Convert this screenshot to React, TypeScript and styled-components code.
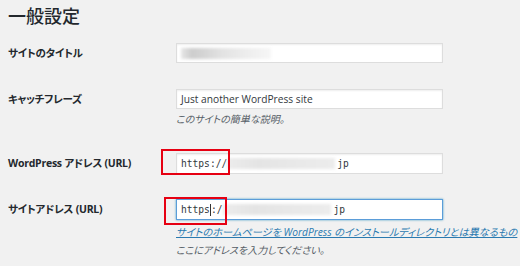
import React from "react";
import styled, { createGlobalStyle } from "styled-components";

const Global = createGlobalStyle`
  html, body { margin: 0; padding: 0; background: #f1f1f1; }
  body { font-family: "Open Sans", "Noto Sans CJK JP", sans-serif; color: #23282d; }
`;

const Page = styled.div`
  width: 520px;
  height: 266px;
  overflow: hidden;
  padding-left: 8px;
  box-sizing: border-box;
`;

const Title = styled.h1`
  margin: 0 0 4px;
  padding-top: 4px;
  font-family: "Noto Sans CJK JP", sans-serif;
  font-weight: 500;
  font-size: 18px;
  line-height: 22px;
  color: #23282d;
`;

const Row = styled.div<{ $pt?: number; $pb?: number }>`
  display: grid;
  grid-template-columns: 168px 267px;
  align-items: start;
  padding: ${(p) => p.$pt ?? 13}px 0 ${(p) => p.$pb ?? 13}px;
`;

const Label = styled.div`
  font-family: "Open Sans", "Noto Sans CJK JP", sans-serif;
  font-feature-settings: "palt";
  font-weight: 700;
  font-size: 10.5px;
  line-height: 20px;
  letter-spacing: -0.25px;
  color: #23282d;
  white-space: nowrap;
`;

const Cell = styled.div`
  position: relative;
  display: flex;
  flex-direction: column;
`;

const Field = styled.div<{ $focus?: boolean; $h?: number }>`
  box-sizing: border-box;
  height: ${(p) => p.$h ?? 20}px;
  width: 267px;
  background: #fff;
  border: 1px solid ${(p) => (p.$focus ? "#5b9dd9" : "#dddddd")};
  box-shadow: ${(p) =>
    p.$focus ? "0 0 2px rgba(30,140,190,.8)" : "inset 0 1px 2px rgba(0,0,0,.07)"};
  display: flex;
  align-items: center;
  padding-left: 4px;
  font-size: 10.2px;
  color: #32373c;
  white-space: nowrap;
  overflow: hidden;
`;

const Mono = styled.span`
  font-family: "DejaVu Sans Mono", "Liberation Mono", monospace;
  font-size: 9.6px;
  color: #32373c;
`;

const Caret = styled.span`
  display: inline-block;
  width: 1px;
  height: 12px;
  background: #333;
`;

const Blur = styled.span<{ $w: number; $ml?: number; $dark?: boolean }>`
  display: inline-block;
  width: ${(p) => p.$w}px;
  height: 11px;
  margin-left: ${(p) => p.$ml ?? 0}px;
  background: ${(p) =>
    p.$dark
      ? "linear-gradient(90deg, #e6e6e6 0%, #cdcdcd 12%, #d4d4d4 25%, #e2e2e2 45%, #ececec 70%, #f6f6f6 100%)"
      : "linear-gradient(90deg, #ececec 0%, #e4e4e4 30%, #e8e8e8 60%, #ececec 100%)"};
  filter: blur(1.5px);
`;

const Desc = styled.p<{ $link?: boolean }>`
  margin: ${(p) => (p.$link ? "5px" : "3px")} 0 0;
  font-family: "Open Sans", "Noto Sans CJK JP", sans-serif;
  font-feature-settings: "palt";
  font-style: italic;
  font-size: ${(p) => (p.$link ? "10.2px" : "10px")};
  line-height: 15px;
  color: #555d66;
  white-space: nowrap;
`;

const Link = styled.a`
  color: #2a7ab0;
  text-decoration: underline;
`;

const Mark = styled.span<{ $l: number; $t: number; $w: number; $h: number }>`
  position: absolute;
  left: ${(p) => p.$l}px;
  top: ${(p) => p.$t}px;
  width: ${(p) => p.$w}px;
  height: ${(p) => p.$h}px;
  border: 2px solid #e60012;
  box-sizing: border-box;
  pointer-events: none;
`;

const Tail = styled.span`
  margin-left: 2px;
`;

export default function App() {
  return (
    <>
      <Global />
      <Page>
        <Title>一般設定</Title>
        <Row>
          <Label>サイトのタイトル</Label>
          <Cell>
            <Field>
              <Blur $w={90} $dark />
            </Field>
          </Cell>
        </Row>
        <Row>
          <Label>キャッチフレーズ</Label>
          <Cell>
            <Field>Just another WordPress site</Field>
            <Desc>このサイトの簡単な説明。</Desc>
          </Cell>
        </Row>
        <Row>
          <Label>WordPress アドレス (URL)</Label>
          <Cell>
            <Field $h={21}>
              <Mono>https://</Mono>
              <Blur $w={108} />
              <Mono>
                <Tail>jp</Tail>
              </Mono>
            </Field>
            <Mark $l={-15} $t={-4} $w={69} $h={26} />
          </Cell>
        </Row>
        <Row $pt={12} $pb={0}>
          <Label>サイトアドレス (URL)</Label>
          <Cell>
            <Field $h={21} $focus>
              <Mono>https</Mono>
              <Caret />
              <Mono>:/</Mono>
              <Blur $w={108} $ml={1} />
              <Mono>
                <Tail>jp</Tail>
              </Mono>
            </Field>
            <Mark $l={-12} $t={-2} $w={63} $h={28} />
            <Desc $link>
              <Link href="#">サイトのホームページを WordPress のインストールディレクトリとは異なるもの</Link>
            </Desc>
            <Desc>ここにアドレスを入力してください。</Desc>
          </Cell>
        </Row>
      </Page>
    </>
  );
}
